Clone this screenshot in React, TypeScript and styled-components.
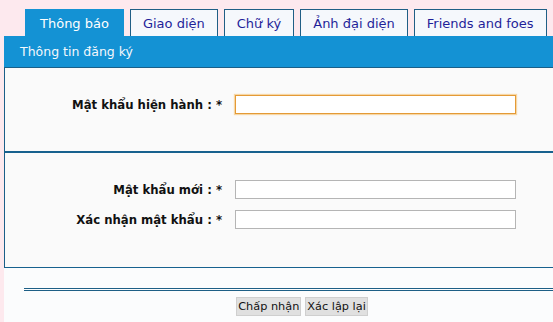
import styled, { createGlobalStyle } from 'styled-components'

const GlobalStyle = createGlobalStyle`
  html, body {
    margin: 0;
    padding: 0;
    background: #fde9ee;
    overflow: hidden;
  }
  body {
    font-family: "DejaVu Sans", Verdana, sans-serif;
  }
`

const Page = styled.div`
  width: 600px;
  padding-left: 4px;
`

const Tabs = styled.div`
  display: flex;
  gap: 6px;
  padding: 9px 0 0 21px;
`

const Tab = styled.div<{ $active?: boolean }>`
  height: 27px;
  box-sizing: border-box;
  display: flex;
  align-items: center;
  padding: 0 ${p => (p.$active ? '14px' : '12px')};
  font-size: 13px;
  color: ${p => (p.$active ? '#ffffff' : '#1f1f99')};
  background: ${p => (p.$active ? '#1492d4' : '#f5f8fc')};
  border: 1px solid ${p => (p.$active ? '#1492d4' : '#1f5f86')};
  border-bottom: none;
`

const Content = styled.div`
  background: #fbfcfd;
  padding-bottom: 20px;
`

const Header = styled.div`
  height: 32px;
  box-sizing: border-box;
  background: #1492d4;
  color: #f4f8fc;
  font-size: 12.5px;
  display: flex;
  align-items: center;
  padding-left: 16px;
  border-bottom: 1px solid #1a5f88;
`

const Panel = styled.div`
  border-left: 1px solid #1a5f88;
  background: #fafafa;
`

const Section = styled.div<{ $last?: boolean }>`
  padding: 27px 0 ${p => (p.$last ? '38px' : '37px')};
  border-bottom: ${p => (p.$last ? '1px' : '2px')} solid #17618e;
  display: flex;
  flex-direction: column;
  gap: 11px;
`

const Row = styled.div`
  display: grid;
  grid-template-columns: 217px 281px;
  column-gap: 13px;
  align-items: center;
`

const Label = styled.label`
  text-align: right;
  font-size: 11.7px;
  font-weight: bold;
  color: #111;
`

const Input = styled.input<{ $focused?: boolean }>`
  height: 19px;
  box-sizing: border-box;
  margin: 0;
  padding: 0 3px;
  border: 1px solid ${p => (p.$focused ? '#e49a36' : '#b5b5b5')};
  box-shadow: ${p => (p.$focused ? '0 0 1px 1px #f6d7a6' : 'none')};
  background: #fff;
  outline: none;
`

const Footer = styled.div`
  width: 556px;
  margin: 20px 0 0 20px;
  border-top: 3px double #1d5f86;
  padding-top: 6px;
  display: flex;
  justify-content: center;
  gap: 4px;
`

const Button = styled.button`
  height: 19px;
  box-sizing: border-box;
  padding: 0 1px;
  font-family: "DejaVu Sans", Verdana, sans-serif;
  font-size: 11.3px;
  color: #111;
  background: #e0e0e0;
  border: 1px solid #cfcfcf;
  border-radius: 0;
`

const tabs = ['Thông báo', 'Giao diện', 'Chữ ký', 'Ảnh đại diện', 'Friends and foes']

const App = () => {
  return (
    <Page>
      <GlobalStyle />
      <Tabs>
        {tabs.map((t, i) => (
          <Tab key={t} $active={i === 0}>{t}</Tab>
        ))}
      </Tabs>
      <Content>
        <Header>Thông tin đăng ký</Header>
        <Panel>
          <Section>
            <Row>
              <Label>Mật khẩu hiện hành : *</Label>
              <Input type="password" $focused autoFocus />
            </Row>
          </Section>
          <Section $last>
            <Row>
              <Label>Mật khẩu mới : *</Label>
              <Input type="password" />
            </Row>
            <Row>
              <Label>Xác nhận mật khẩu : *</Label>
              <Input type="password" />
            </Row>
          </Section>
        </Panel>
        <Footer>
          <Button>Chấp nhận</Button>
          <Button>Xác lập lại</Button>
        </Footer>
      </Content>
    </Page>
  )
}

export default App
